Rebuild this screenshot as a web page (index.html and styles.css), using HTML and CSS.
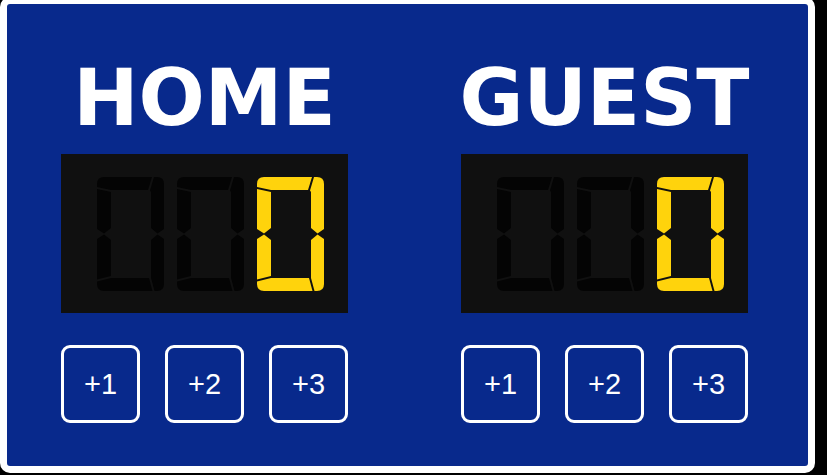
FILE: index.html
```html
<!DOCTYPE html>
<html lang="en">
<head>
<meta charset="utf-8">
<title>Scoreboard</title>
<link rel="stylesheet" href="styles.css">
</head>
<body>
<svg class="defs" width="0" height="0" aria-hidden="true">
  <defs>
    <symbol id="seg-zero" viewBox="0 0 67 114">
      <path d="M0,10 L0,7 Q0,0 7,0 L55,0 L51,13 L14,13 Z"/>
      <path d="M0,12 L14,15 L14,51 L7,56.5 L0,52 Z"/>
      <path d="M57,0 L60,0 Q67,0 67,7 L67,52 L60.5,56.5 L54,51 L54,15 L53,13.5 Z"/>
      <path d="M0,62 L7,57.5 L14,63 L14,99 L0,102.5 Z"/>
      <path d="M0,104.5 L14,101 L52,101 L55.5,114 L7,114 Q0,114 0,107 Z"/>
      <path d="M54,63 L60.5,57.5 L67,62 L67,107 Q67,114 60,114 L57.5,114 L54,101 L54,100 Z"/>
    </symbol>
  </defs>
</svg>
<div class="board">
  <section class="team">
    <h2 class="team-name">HOME</h2>
    <div class="display">
      <svg class="digit dim"><use href="#seg-zero"/></svg>
      <svg class="digit dim"><use href="#seg-zero"/></svg>
      <svg class="digit lit"><use href="#seg-zero"/></svg>
    </div>
    <div class="buttons">
      <button class="btn">+1</button>
      <button class="btn">+2</button>
      <button class="btn">+3</button>
    </div>
  </section>
  <section class="team">
    <h2 class="team-name">GUEST</h2>
    <div class="display">
      <svg class="digit dim"><use href="#seg-zero"/></svg>
      <svg class="digit dim"><use href="#seg-zero"/></svg>
      <svg class="digit lit"><use href="#seg-zero"/></svg>
    </div>
    <div class="buttons">
      <button class="btn">+1</button>
      <button class="btn">+2</button>
      <button class="btn">+3</button>
    </div>
  </section>
</div>
</body>
</html>
```
FILE: styles.css
```css
html, body {
  margin: 0;
  padding: 0;
  background: #000;
}

body {
  width: 827px;
  height: 475px;
  overflow: hidden;
}

.defs {
  position: absolute;
  width: 0;
  height: 0;
}

.board {
  box-sizing: border-box;
  width: 815px;
  height: 476px;
  margin-top: -3px;
  border: 7px solid #fff;
  border-radius: 10px;
  background: #08298c;
  display: flex;
  gap: 113px;
  padding: 49px 0 0 54px;
}

.team {
  width: 287px;
  display: flex;
  flex-direction: column;
  align-items: center;
}

.team-name {
  margin: 0;
  font: bold 78px/90px "DejaVu Sans", Verdana, sans-serif;
  color: #fff;
  white-space: nowrap;
}

.display {
  box-sizing: border-box;
  margin-top: 11px;
  width: 287px;
  height: 159px;
  background: #101010;
  display: flex;
  justify-content: flex-end;
  align-items: center;
  gap: 13px;
  padding-right: 24px;
}

.digit {
  width: 67px;
  height: 114px;
  display: block;
}

.digit.dim {
  fill: #040404;
}

.digit.lit {
  fill: #ffd30c;
}

.buttons {
  margin-top: 32px;
  display: flex;
  gap: 25px;
}

.btn {
  box-sizing: border-box;
  width: 79px;
  height: 78px;
  padding: 0;
  border: 3px solid #fff;
  border-radius: 9px;
  background: transparent;
  color: #fff;
  font: 29px "Liberation Sans", Arial, sans-serif;
}
```
